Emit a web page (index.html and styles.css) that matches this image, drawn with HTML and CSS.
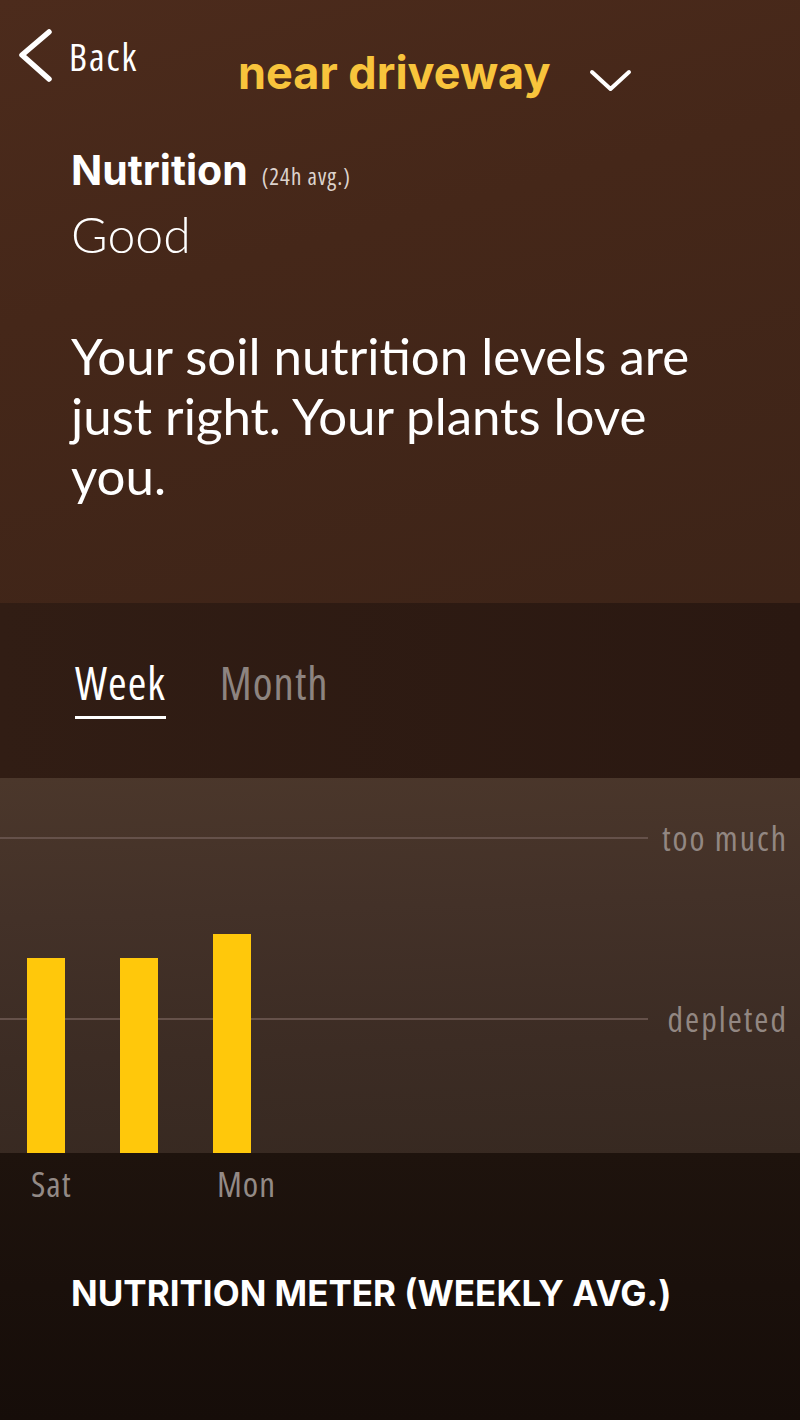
FILE: index.html
```html
<!DOCTYPE html>
<html>
<head>
<meta charset="utf-8">
<link rel="stylesheet" href="styles.css">
</head>
<body>
<div class="screen">
  <section class="top">
    <header class="nav">
      <a class="back">
        <svg class="back-icon" width="36" height="54" viewBox="0 0 36 54"><path d="M31 3 L4 26 L31 50" fill="none" stroke="#fff" stroke-width="5.5" stroke-linecap="round" stroke-linejoin="round"/></svg>
        <span class="back-text">Back</span>
      </a>
      <div class="title">
        <span class="title-text">near driveway</span>
        <svg class="title-chev" width="45" height="24" viewBox="0 0 45 24"><path d="M4 4 L22.5 21 L41 4" fill="none" stroke="#fff" stroke-width="4" stroke-linecap="round" stroke-linejoin="round"/></svg>
      </div>
    </header>
    <div class="summary">
      <div class="metric"><span class="metric-name">Nutrition</span><span class="metric-note">(24h avg.)</span></div>
      <div class="status">Good</div>
      <p class="message">Your soil nutrition levels are just right. Your plants love you.</p>
    </div>
  </section>
  <nav class="tabs">
    <span class="tab active">Week</span>
    <span class="tab">Month</span>
  </nav>
  <section class="chart">
    <div class="guides">
      <div class="guide guide-high"><span class="guide-line"></span><span class="guide-label">too much</span></div>
      <div class="guide guide-low"><span class="guide-line"></span><span class="guide-label">depleted</span></div>
    </div>
    <div class="bars">
      <span class="bar" style="height:195px"></span>
      <span class="bar" style="height:195px"></span>
      <span class="bar" style="height:219px"></span>
    </div>
  </section>
  <section class="bottom">
    <div class="days">
      <span class="day">Sat</span>
      <span class="day"></span>
      <span class="day">Mon</span>
    </div>
    <h2 class="meter-title">NUTRITION METER (WEEKLY AVG.)</h2>
  </section>
</div>
</body>
</html>
```
FILE: styles.css
```css
* { box-sizing: border-box; }
html, body { margin: 0; padding: 0; }
body { width: 800px; height: 1420px; overflow: hidden; background: #1a100b; font-family: "Open Sans", sans-serif; color: #fff; }
.screen { display: flex; flex-direction: column; height: 1420px; }

.top { height: 603px; flex-shrink: 0; background: linear-gradient(165deg, #4c2b1c 0%, #452719 40%, #3d2418 100%); display: flex; flex-direction: column; }
.nav { display: flex; align-items: flex-start; padding: 29px 0 0 18px; height: 150px; }
.back { display: flex; align-items: flex-start; width: 220px; flex-shrink: 0; }
.back-icon { display: block; }
.back-text { font-size: 38px; line-height: 38px; font-stretch: 75%; letter-spacing: 2px; margin-left: 15px; margin-top: 8px; color: #fff; }
.title { display: flex; align-items: flex-start; margin-top: 21px; }
.title-text { font-family: "Inter", sans-serif; font-weight: 700; font-size: 45px; line-height: 45px; color: #f8c43c; }
.title-chev { display: block; margin-left: 37px; margin-top: 18px; }

.summary { padding-left: 71px; }
.metric { display: flex; align-items: baseline; }
.metric-name { font-family: "Inter", sans-serif; font-weight: 700; font-size: 41px; line-height: 41px; }
.metric-note { font-size: 23px; font-stretch: 75%; letter-spacing: 1px; color: #ddd3cd; margin-left: 14px; }
.status { font-family: "Lato", sans-serif; font-weight: 300; font-size: 50px; line-height: 50px; margin-top: 17px; }
.message { margin: 67px 0 0; font-family: "Lato", sans-serif; font-weight: 400; font-size: 51px; line-height: 60px; width: 660px; }

.tabs { height: 175px; flex-shrink: 0; background: linear-gradient(90deg, #311d14 0%, #2a1811 100%); display: flex; align-items: flex-start; padding: 57px 0 0 75px; gap: 54px; }
.tab { font-size: 45px; line-height: 45px; font-stretch: 75%; letter-spacing: 1px; color: #8d8480; padding-bottom: 11px; }
.tab.active { color: #fff; border-bottom: 3px solid #fff; }

.chart { height: 375px; flex-shrink: 0; display: grid; background: linear-gradient(178deg, #4b372b 0%, #433128 35%, #3c2c24 70%, #372921 100%); }
.guides, .bars { grid-area: 1 / 1; }
.guides { display: flex; flex-direction: column; padding-top: 43px; }
.guide { display: flex; align-items: center; height: 34px; }
.guide-low { margin-top: 147px; }
.guide-line { flex: 1; height: 2px; background: #65514a; }
.guide-label { width: 152px; padding-right: 12px; text-align: right; font-size: 34px; line-height: 34px; font-stretch: 75%; letter-spacing: 2px; color: #928782; }
.bars { display: flex; align-items: flex-end; padding-left: 27px; gap: 55px; }
.bar { width: 38px; background: #ffc80b; }

.bottom { flex: 1; background: linear-gradient(180deg, #1e130d 0%, #160d09 100%); padding-top: 13px; }
.days { display: flex; padding-left: 31px; }
.day { width: 93px; flex-shrink: 0; font-size: 35px; line-height: 35px; font-stretch: 75%; letter-spacing: 1px; color: #938a86; }
.meter-title { margin: 74px 0 0 71px; font-family: "Inter", sans-serif; font-weight: 700; font-size: 35px; line-height: 36px; color: #fff; }
```
